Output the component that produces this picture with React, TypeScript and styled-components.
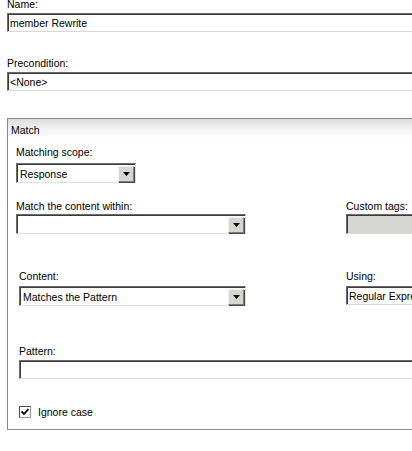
import React from "react";
import styled, { createGlobalStyle } from "styled-components";

const Global = createGlobalStyle`
  html, body { margin: 0; padding: 0; background: #fff; overflow: hidden; }
  body {
    font-family: "Liberation Sans", Arial, sans-serif;
    font-size: 10.5px;
    color: #000;
  }
`;

const Page = styled.div`
  width: 640px;
  margin-top: -3px;
  padding-left: 7px;
  display: flex;
  flex-direction: column;
`;

const Field = styled.div<{ $mt?: number; $indent?: number }>`
  display: flex;
  flex-direction: column;
  margin-top: ${(p) => p.$mt ?? 0}px;
  padding-left: ${(p) => p.$indent ?? 0}px;
`;

const Label = styled.div<{ $gap?: number }>`
  height: 14px;
  line-height: 14px;
  margin-bottom: ${(p) => p.$gap ?? 2}px;
  white-space: nowrap;
`;

const TextBox = styled.div<{ $disabled?: boolean; $width?: number }>`
  box-sizing: border-box;
  height: ${(p) => (p.$disabled ? 20 : 19)}px;
  width: ${(p) => (p.$width ? `${p.$width}px` : "100%")};
  display: flex;
  align-items: center;
  padding: 1px 0 0 2px;
  white-space: nowrap;
  overflow: hidden;
  background: ${(p) => (p.$disabled ? "#d6d6d3" : "#fff")};
  border-top: 1px solid #6a6a6a;
  border-left: 1px solid #6a6a6a;
  border-bottom: 1px solid #d8d8d8;
  border-right: 1px solid #d8d8d8;
  box-shadow: inset 1px 1px 0 #3c3c3c;
`;

const Select = styled.div<{ $width: number }>`
  box-sizing: border-box;
  height: 20px;
  width: ${(p) => p.$width}px;
  display: flex;
  align-items: center;
  background: #fff;
  border-top: 1px solid #6a6a6a;
  border-left: 1px solid #6a6a6a;
  border-bottom: 1px solid #e0e0e0;
  border-right: 1px solid #e0e0e0;
  box-shadow: inset 1px 1px 0 #3c3c3c;
`;

const SelectText = styled.span`
  flex: 1;
  padding: 1px 0 0 3px;
  white-space: nowrap;
  overflow: hidden;
`;

const DropButton = styled.span`
  box-sizing: border-box;
  width: 16px;
  height: 16px;
  margin: 1px 1px 0 0;
  display: flex;
  align-items: center;
  justify-content: center;
  background: #d8d6d0;
  border-top: 1px solid #f4f4f4;
  border-left: 1px solid #f4f4f4;
  border-right: 1px solid #7c7c7c;
  border-bottom: 1px solid #7c7c7c;
  box-shadow: 1px 1px 0 #4a4a4a;
`;

const Group = styled.div`
  margin-top: 27px;
  border: 1px solid #8a8a8a;
  display: flex;
  flex-direction: column;
  padding-bottom: 11px;
`;

const GroupHeader = styled.div`
  height: 20px;
  box-sizing: border-box;
  padding: 4px 0 0 3px;
  line-height: 14px;
  background: linear-gradient(to bottom, #dcdcdc 0%, #f4f4f4 55%, #ffffff 100%);
`;

const Row = styled.div<{ $mt: number; $indent: number; $left: number }>`
  display: grid;
  grid-template-columns: ${(p) => p.$left}px 160px;
  column-gap: 100px;
  margin-top: ${(p) => p.$mt}px;
  padding-left: ${(p) => p.$indent}px;
`;

const CheckRow = styled.label`
  display: flex;
  align-items: center;
  gap: 7px;
  margin-top: 26px;
  padding-left: 11px;
  height: 13px;
`;

const CheckBox = styled.span`
  box-sizing: border-box;
  width: 12px;
  height: 12px;
  display: flex;
  align-items: center;
  justify-content: center;
  background: #fff;
  border-top: 1px solid #4a4a4a;
  border-left: 1px solid #4a4a4a;
  border-right: 1px solid #9a9a9a;
  border-bottom: 1px solid #9a9a9a;
`;

const Arrow = () => (
  <svg width="7" height="4" viewBox="0 0 7 4">
    <path d="M0 0h7L3.5 4z" fill="#000" />
  </svg>
);

const Check = () => (
  <svg width="8" height="8" viewBox="0 0 8 8">
    <path d="M0.5 3.5 L3 6 L7.5 1" stroke="#000" strokeWidth="1.8" fill="none" />
  </svg>
);

const Dropdown = ({ width, value }: { width: number; value?: string }) => (
  <Select $width={width}>
    <SelectText>{value ?? ""}</SelectText>
    <DropButton>
      <Arrow />
    </DropButton>
  </Select>
);

export default function App() {
  return (
    <>
      <Global />
      <Page>
        <Field>
          <Label>Name:</Label>
          <TextBox>member Rewrite</TextBox>
        </Field>
        <Field $mt={24}>
          <Label>Precondition:</Label>
          <TextBox>&lt;None&gt;</TextBox>
        </Field>
        <Group>
          <GroupHeader>Match</GroupHeader>
          <Field $mt={6} $indent={8}>
            <Label $gap={4}>Matching scope:</Label>
            <Dropdown width={120} value="Response" />
          </Field>
          <Row $mt={16} $indent={8} $left={230}>
            <Field>
              <Label $gap={1}>Match the content within:</Label>
              <Dropdown width={230} />
            </Field>
            <Field>
              <Label $gap={1}>Custom tags:</Label>
              <TextBox $disabled />
            </Field>
          </Row>
          <Row $mt={35} $indent={11} $left={227}>
            <Field>
              <Label $gap={3}>Content:</Label>
              <Dropdown width={227} value="Matches the Pattern" />
            </Field>
            <Field>
              <Label $gap={3}>Using:</Label>
              <TextBox>Regular Expressions</TextBox>
            </Field>
          </Row>
          <Field $mt={38} $indent={11}>
            <Label $gap={2}>Pattern:</Label>
            <TextBox $width={560} />
          </Field>
          <CheckRow>
            <CheckBox>
              <Check />
            </CheckBox>
            Ignore case
          </CheckRow>
        </Group>
      </Page>
    </>
  );
}
